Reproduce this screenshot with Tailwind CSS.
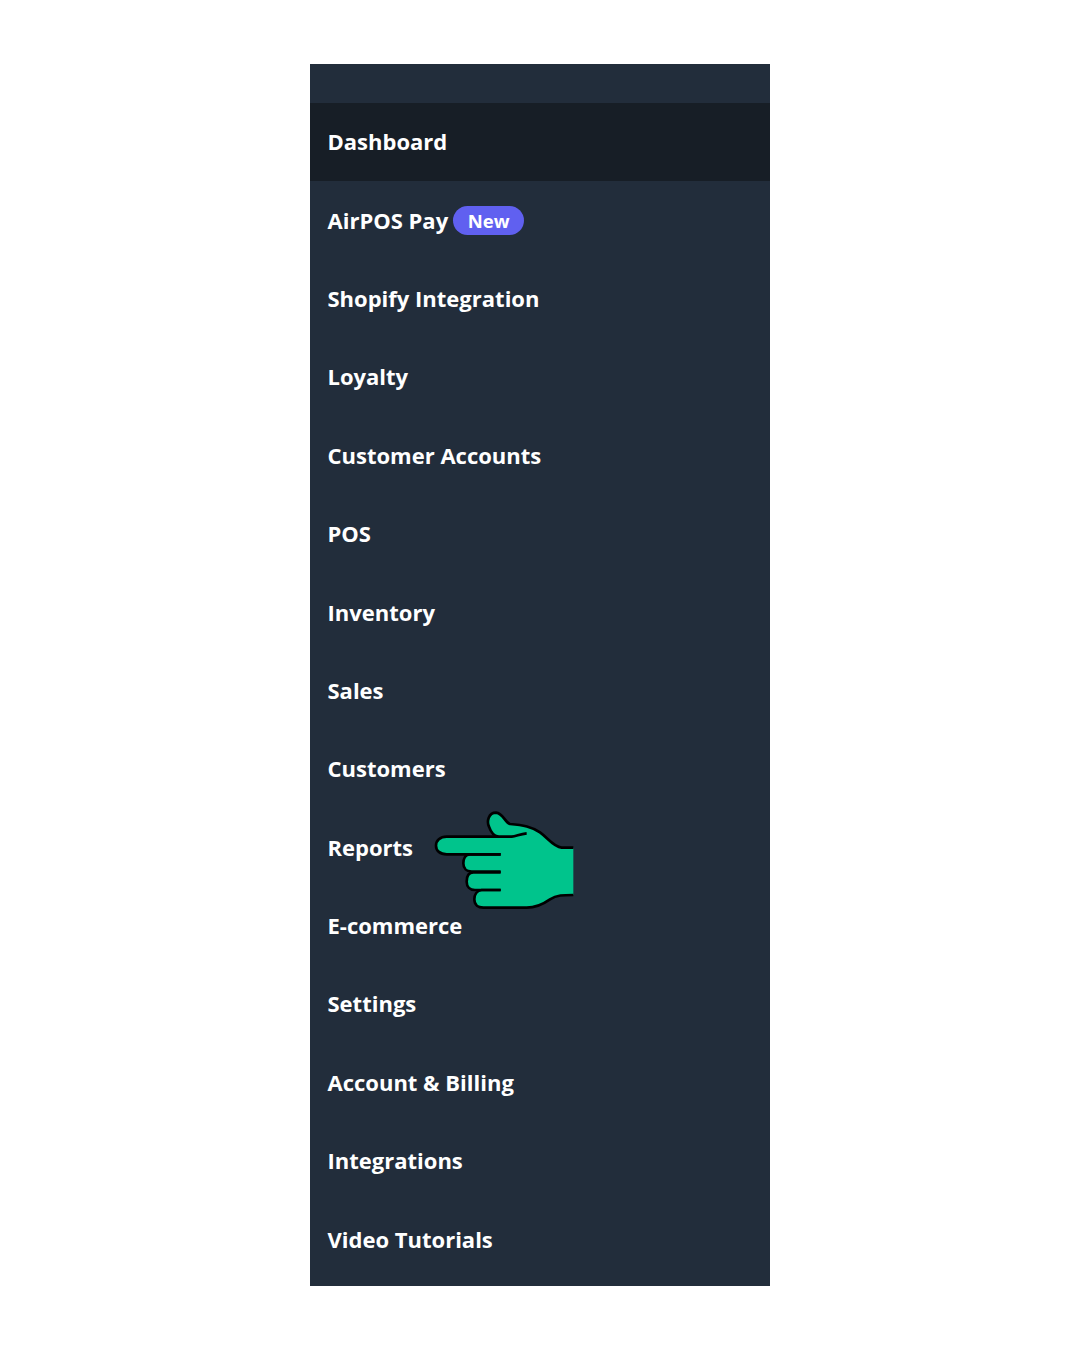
<!DOCTYPE html>
<html lang="en">
<head>
  <meta charset="UTF-8">
  <title>Sidebar</title>
  <script src="https://cdn.jsdelivr.net/npm/@tailwindcss/browser@4"></script>
</head>
<body class="bg-white">
  <div class="pt-[64px] flex justify-center font-['Open_Sans',sans-serif]">
    <nav class="relative w-[460px] h-[1222px] bg-[#222d3b] pt-[39px] text-white font-bold text-[22px]">
      <a class="flex items-center h-[78.4px] pl-[17.5px] pb-[1px] bg-[#171e26]">Dashboard</a>
      <a class="flex items-center h-[78.4px] pl-[17.5px] pb-[1px]">AirPOS Pay
        <span class="ml-[5px] mt-[1px] flex items-center h-[29px] px-[14.5px] rounded-full bg-[#6060f0] text-[18.5px]">New</span>
      </a>
      <a class="flex items-center h-[78.4px] pl-[17.5px] pb-[1px]">Shopify Integration</a>
      <a class="flex items-center h-[78.4px] pl-[17.5px] pb-[1px]">Loyalty</a>
      <a class="flex items-center h-[78.4px] pl-[17.5px] pb-[1px]">Customer Accounts</a>
      <a class="flex items-center h-[78.4px] pl-[17.5px] pb-[1px]">POS</a>
      <a class="flex items-center h-[78.4px] pl-[17.5px] pb-[1px]">Inventory</a>
      <a class="flex items-center h-[78.4px] pl-[17.5px] pb-[1px]">Sales</a>
      <a class="flex items-center h-[78.4px] pl-[17.5px] pb-[1px]">Customers</a>
      <a class="flex items-center h-[78.4px] pl-[17.5px] pb-[1px]">Reports</a>
      <a class="flex items-center h-[78.4px] pl-[17.5px] pb-[1px]">E-commerce</a>
      <a class="flex items-center h-[78.4px] pl-[17.5px] pb-[1px]">Settings</a>
      <a class="flex items-center h-[78.4px] pl-[17.5px] pb-[1px]">Account &amp; Billing</a>
      <a class="flex items-center h-[78.4px] pl-[17.5px] pb-[1px]">Integrations</a>
      <a class="flex items-center h-[78.4px] pl-[17.5px] pb-[1px]">Video Tutorials</a>

      <!-- pointing hand -->
      <svg class="absolute left-[110px] top-[736px] w-[170px] h-[120px]" viewBox="0 0 510 360" fill="none">
        <path fill="#00c48c" d="M460 143H425C400 140 385 115 360 97C335 80 310 75 270 72C255 68 250 40 228 38C205 38 200 65 207 80C212 95 222 108 235 110H80C60 110 48 122 48 137C48 152 60 163 80 163H150C135 163 130 178 130 190C130 205 140 215 155 215H160C145 217 140 230 140 245C140 260 150 270 165 270H185C170 272 163 285 163 298C163 315 175 323 190 323H320C350 323 370 312 390 298C410 285 430 285 460 285Z"/>
        <g stroke="#000000" stroke-width="8" stroke-linejoin="round">
          <path d="M460 143H425C400 140 385 115 360 97C335 80 310 75 270 72C255 68 250 40 228 38C205 38 200 65 207 80C212 95 222 108 235 110"/>
          <path d="M320 100C300 102 290 108 275 110H80C60 110 48 122 48 137C48 152 60 163 80 163H242"/>
          <path d="M242 163H150C135 163 130 178 130 190C130 205 140 215 155 215H242"/>
          <path d="M242 217H160C145 217 140 230 140 245C140 260 150 270 165 270H242"/>
          <path d="M242 270H185C170 272 163 285 163 298C163 315 175 323 190 323H320C350 323 370 312 390 298C410 285 430 285 460 285"/>
        </g>
      </svg>
    </nav>
  </div>
</body>
</html>
